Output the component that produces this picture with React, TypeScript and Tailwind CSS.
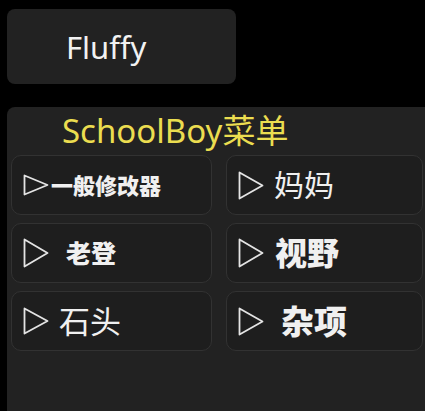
import React from "react";

type Item = {
  label: string;
  size: number;
  bold: boolean;
  gap: number;
  tri: number;
};

const items: Item[] = [
  { label: "一般修改器", size: 22, bold: true, gap: 2, tri: 22 },
  { label: "妈妈", size: 30, bold: false, gap: 10, tri: 29 },
  { label: "老登", size: 25, bold: true, gap: 17, tri: 30 },
  { label: "视野", size: 32, bold: true, gap: 11, tri: 30 },
  { label: "石头", size: 31, bold: false, gap: 10, tri: 28 },
  { label: "杂项", size: 33, bold: true, gap: 17, tri: 29 },
];

function Triangle({ h }: { h: number }) {
  const w = 26;
  return (
    <svg width={w} height={h} viewBox={`0 0 ${w} ${h}`} className="shrink-0">
      <path
        d={`M1.5 1.5 L${w - 1.5} ${h / 2} L1.5 ${h - 1.5} Z`}
        fill="none"
        stroke="#e4e4e4"
        strokeWidth="1.8"
        strokeLinejoin="round"
      />
    </svg>
  );
}

export default function App() {
  return (
    <div
      className="relative h-[411px] w-[425px] overflow-hidden bg-black"
      style={{ fontFamily: '"Noto Sans", "Noto Sans CJK SC", sans-serif' }}
    >
      {/* Header card */}
      <div className="ml-[7px] mt-[9px] flex h-[75px] w-[229px] items-center rounded-lg bg-[#222222] pl-[59px]">
        <span className="pt-[2px] text-[31px] leading-none text-[#f2f2f2]">Fluffy</span>
      </div>

      {/* Menu panel */}
      <div className="ml-[7px] mt-[23px] h-[310px] w-[430px] rounded-tl-lg bg-[#222222] pl-[4px]">
        <div className="h-[48px] pl-[51px] pt-[5px] text-[33px] leading-[38px] text-[#ebdd50]">
          SchoolBoy菜单
        </div>
        <div className="grid grid-cols-[201px_197px] gap-x-[14px] gap-y-[8px]">
          {items.map((it) => (
            <div
              key={it.label}
              className="flex h-[60px] items-center rounded-[10px] border border-[#323232] bg-[#1e1e1e] pl-[11px]"
            >
              <Triangle h={it.tri} />
              <span
                className={`leading-none text-[#f0f0f0] ${it.bold ? "font-black" : "font-normal"}`}
                style={{ fontSize: it.size, marginLeft: it.gap }}
              >
                {it.label}
              </span>
            </div>
          ))}
        </div>
      </div>
    </div>
  );
}
